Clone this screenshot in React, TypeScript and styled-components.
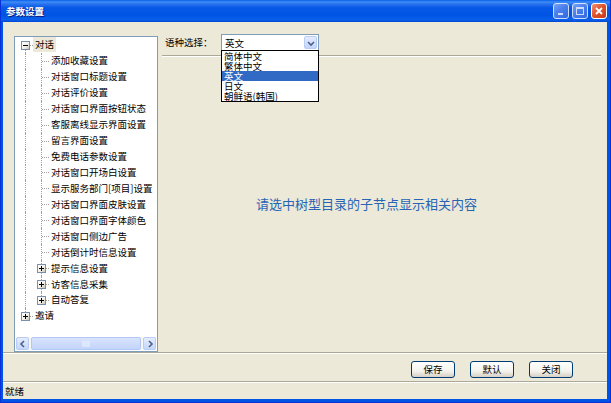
import React from "react";
import styled, { createGlobalStyle } from "styled-components";

const FONT = `"Noto Sans CJK SC", "Noto Sans", sans-serif`;

const GlobalStyle = createGlobalStyle`
  html, body { margin: 0; padding: 0; background: #fff; }
  body { font-family: ${FONT}; font-size: 9.5px; color: #000; }
  * { box-sizing: border-box; }
`;

const Window = styled.div`
  width: 611px;
  height: 403px;
  display: flex;
  flex-direction: column;
  background: #0054e3;
  border-left: 1px solid #0831d9;
  border-right: 1px solid #0831d9;
  border-bottom: 1px solid #0831d9;
`;

const TitleBar = styled.div`
  height: 22px;
  flex: none;
  display: flex;
  align-items: center;
  padding: 0 2px 0 5px;
  background: linear-gradient(180deg, #0a5fe8 0%, #3d8df5 9%, #2a73ef 18%, #0758e6 35%, #0054e3 70%, #0a60ec 90%, #0046d0 100%);
`;

const Title = styled.div`
  flex: 1;
  color: #fff;
  font-weight: bold;
  font-size: 9.5px;
  text-shadow: 1px 1px 0 #0a1a7a;
`;

const CaptionButtons = styled.div`
  display: flex;
  gap: 3px;
  margin-right: 1px;
`;

const CaptionButton = styled.div<{ $close?: boolean }>`
  width: 16px;
  height: 16px;
  border: 1px solid #fff;
  border-radius: 3px;
  display: flex;
  align-items: center;
  justify-content: center;
  background: ${(p) =>
    p.$close
      ? "linear-gradient(135deg, #f19275 0%, #e0552c 45%, #c7391a 100%)"
      : "linear-gradient(135deg, #8fb1f7 0%, #5b88ee 45%, #3f6fe3 100%)"};
  opacity: ${(p) => (p.$close ? 1 : 0.8)};
`;

const Client = styled.div`
  flex: 1;
  margin: 0 3px 3px 2px;
  background: #ece9d8;
  display: flex;
  flex-direction: column;
`;

const Main = styled.div`
  height: 330px;
  flex: none;
  display: flex;
  padding: 12px 6px 0 11px;
`;

const TreePanel = styled.div`
  margin-top: 2px;
  width: 144px;
  height: 316px;
  border: 1px solid #7f9db9;
  background: #fff;
  display: flex;
  flex-direction: column;
  padding: 1px;
`;

const TreeBody = styled.div`
  flex: 1;
  padding: 0 0 0 1px;
  margin-top: -1px;
  overflow: hidden;
`;

const Row = styled.div`
  height: 15.95px;
  display: flex;
  align-items: center;
  white-space: nowrap;
`;

const Cell = styled.div`
  position: relative;
  width: 16px;
  height: 16px;
  flex: none;
`;

const VLine = styled.div<{ $from: "top" | "mid"; $to: "mid" | "bottom" }>`
  position: absolute;
  left: 8px;
  top: ${(p) => (p.$from === "top" ? "0" : "8px")};
  bottom: ${(p) => (p.$to === "bottom" ? "0" : "8px")};
  border-left: 1px dotted #a0a0a0;
`;

const HLine = styled.div`
  position: absolute;
  left: 9px;
  right: 0;
  top: 8px;
  border-top: 1px dotted #a0a0a0;
`;

const Expander = styled.div`
  position: absolute;
  left: 4px;
  top: 4px;
  width: 9px;
  height: 9px;
  border: 1px solid #7a8fae;
  background: linear-gradient(135deg, #ffffff 0%, #f0eee6 60%, #c9c4b2 100%);
  display: flex;
  align-items: center;
  justify-content: center;
`;

const Label = styled.span<{ $selected?: boolean }>`
  padding: 0 2px;
  line-height: 15px;
  height: 15px;
  background: ${(p) => (p.$selected ? "#ece9d8" : "transparent")};
`;

const HScroll = styled.div`
  height: 13px;
  flex: none;
  display: flex;
  background: #f7f6f0;
`;

const ScrollBtn = styled.div`
  width: 13px;
  flex: none;
  border: 1px solid #b8ccf6;
  border-radius: 2px;
  background: linear-gradient(180deg, #e4ecfd 0%, #c6d7fb 100%);
  display: flex;
  align-items: center;
  justify-content: center;
`;

const ScrollThumb = styled.div`
  flex: 1;
  margin: 0 2px;
  border: 1px solid #b2c7f4;
  border-radius: 2px;
  background: linear-gradient(180deg, #d9e4fc 0%, #c3d4fa 100%);
  display: flex;
  align-items: center;
  justify-content: center;
`;

const RightPane = styled.div`
  flex: 1;
  display: flex;
  flex-direction: column;
  margin-left: 4px;
`;

const Header = styled.div`
  height: 21px;
  flex: none;
  display: flex;
  align-items: flex-start;
  position: relative;
  z-index: 2;
`;

const FieldLabel = styled.span`
  margin: 3px 0 0 3px;
  width: 56px;
  line-height: 10px;
`;

const Combo = styled.div`
  position: relative;
  width: 98px;
  height: 17px;
  border: 1px solid #7f9db9;
  background: #fff;
  display: flex;
  align-items: center;
  padding: 1px 1px 1px 3px;
`;

const ComboText = styled.span`
  flex: 1;
`;

const ComboArrow = styled.div`
  width: 13px;
  height: 13px;
  border: 1px solid #b8ccf6;
  border-radius: 2px;
  background: linear-gradient(180deg, #e4ecfd 0%, #c3d5fb 100%);
  display: flex;
  align-items: center;
  justify-content: center;
`;

const DropList = styled.div`
  position: absolute;
  left: -1px;
  top: 15px;
  width: 98px;
  border: 1px solid #000;
  background: #fff;
  padding: 0;
`;

const DropItem = styled.div<{ $selected?: boolean }>`
  height: 10px;
  line-height: 10px;
  padding-left: 2px;
  color: ${(p) => (p.$selected ? "#fff" : "#000")};
  background: ${(p) => (p.$selected ? "#316ac5" : "transparent")};
`;

const ContentPanel = styled.div`
  flex: 1;
  border-top: 1px solid #aca899;
  box-shadow: inset 0 1px 0 #fff;
  display: flex;
  align-items: center;
  justify-content: center;
  padding-right: 30px;
  padding-bottom: 1px;
`;

const Message = styled.div`
  color: #2864b4;
  font-size: 13px;
  line-height: 16px;
`;

const Etched = styled.div`
  height: 2px;
  flex: none;
  border-top: 1px solid #aca899;
  border-bottom: 1px solid #fff;
`;

const ButtonBar = styled.div`
  height: 27px;
  flex: none;
  display: flex;
  justify-content: flex-end;
  align-items: flex-start;
  gap: 15px;
  padding: 7px 34px 0 0;
`;

const DialogButton = styled.button`
  width: 44px;
  height: 17px;
  padding: 0;
  border: 1px solid #003c74;
  border-radius: 3px;
  background: linear-gradient(180deg, #ffffff 0%, #f4f3ee 60%, #d6d0c5 100%);
  font-family: ${FONT};
  font-size: 9.5px;
  line-height: 15px;
  color: #000;
`;

const StatusBar = styled.div`
  flex: 1;
  display: flex;
  align-items: center;
  padding-left: 2px;
  border-top: 1px solid #aca899;
  box-shadow: inset 0 1px 0 #fff;
`;

type Node = { label: string; level: number; kind: "leaf" | "plus" | "minus"; last?: boolean; selected?: boolean };

const nodes: Node[] = [
  { label: "对话", level: 0, kind: "minus", selected: true },
  { label: "添加收藏设置", level: 1, kind: "leaf" },
  { label: "对话窗口标题设置", level: 1, kind: "leaf" },
  { label: "对话评价设置", level: 1, kind: "leaf" },
  { label: "对话窗口界面按钮状态", level: 1, kind: "leaf" },
  { label: "客服离线显示界面设置", level: 1, kind: "leaf" },
  { label: "留言界面设置", level: 1, kind: "leaf" },
  { label: "免费电话参数设置", level: 1, kind: "leaf" },
  { label: "对话窗口开场白设置", level: 1, kind: "leaf" },
  { label: "显示服务部门[项目]设置", level: 1, kind: "leaf" },
  { label: "对话窗口界面皮肤设置", level: 1, kind: "leaf" },
  { label: "对话窗口界面字体颜色", level: 1, kind: "leaf" },
  { label: "对话窗口侧边广告", level: 1, kind: "leaf" },
  { label: "对话倒计时信息设置", level: 1, kind: "leaf" },
  { label: "提示信息设置", level: 1, kind: "plus" },
  { label: "访客信息采集", level: 1, kind: "plus" },
  { label: "自动答复", level: 1, kind: "plus", last: true },
  { label: "邀请", level: 0, kind: "plus", last: true },
];

const PlusMinus = ({ plus }: { plus: boolean }) => (
  <svg width="7" height="7" viewBox="0 0 7 7">
    <rect x="1" y="3" width="5" height="1" fill="#000" />
    {plus && <rect x="3" y="1" width="1" height="5" fill="#000" />}
  </svg>
);

const TreeRow = ({ n, first }: { n: Node; first: boolean }) => {
  const cells: React.ReactNode[] = [];
  if (n.level === 1) {
    cells.push(
      <Cell key="p">
        <VLine $from="top" $to="bottom" />
      </Cell>
    );
  }
  cells.push(
    <Cell key="c">
      <VLine $from={first ? "mid" : "top"} $to={n.last ? "mid" : "bottom"} />
      <HLine />
      {n.kind !== "leaf" && (
        <Expander>
          <PlusMinus plus={n.kind === "plus"} />
        </Expander>
      )}
    </Cell>
  );
  return (
    <Row>
      {cells}
      <Label $selected={n.selected}>{n.label}</Label>
    </Row>
  );
};

const Arrow = ({ dir }: { dir: "left" | "right" | "down" }) => {
  const d =
    dir === "left" ? "M5 1 L2 4 L5 7" : dir === "right" ? "M3 1 L6 4 L3 7" : "M1 3 L4 6 L7 3";
  return (
    <svg width="8" height="8" viewBox="0 0 8 8">
      <path d={d} fill="none" stroke="#4d6185" strokeWidth="1.6" />
    </svg>
  );
};

export default function App() {
  return (
    <>
      <GlobalStyle />
      <Window>
        <TitleBar>
          <Title>参数设置</Title>
          <CaptionButtons>
            <CaptionButton>
              <svg width="10" height="10" viewBox="0 0 10 10">
                <rect x="2" y="7" width="5" height="2" fill="#fff" />
              </svg>
            </CaptionButton>
            <CaptionButton>
              <svg width="10" height="10" viewBox="0 0 10 10">
                <rect x="1.5" y="1.5" width="7" height="7" fill="none" stroke="#fff" strokeWidth="1" />
                <rect x="1" y="1" width="8" height="2" fill="#fff" />
              </svg>
            </CaptionButton>
            <CaptionButton $close>
              <svg width="10" height="10" viewBox="0 0 10 10">
                <path d="M2 2 L8 8 M8 2 L2 8" stroke="#fff" strokeWidth="1.8" />
              </svg>
            </CaptionButton>
          </CaptionButtons>
        </TitleBar>
        <Client>
          <Main>
            <TreePanel>
              <TreeBody>
                {nodes.map((n, i) => (
                  <TreeRow key={i} n={n} first={i === 0} />
                ))}
              </TreeBody>
              <HScroll>
                <ScrollBtn>
                  <Arrow dir="left" />
                </ScrollBtn>
                <ScrollThumb>
                  <svg width="8" height="6" viewBox="0 0 8 6">
                    <path d="M1 0 V6 M3 0 V6 M5 0 V6 M7 0 V6" stroke="#eef3fe" strokeWidth="1" />
                  </svg>
                </ScrollThumb>
                <ScrollBtn>
                  <Arrow dir="right" />
                </ScrollBtn>
              </HScroll>
            </TreePanel>
            <RightPane>
              <Header>
                <FieldLabel>语种选择：</FieldLabel>
                <Combo>
                  <ComboText>英文</ComboText>
                  <ComboArrow>
                    <Arrow dir="down" />
                  </ComboArrow>
                  <DropList>
                    <DropItem>简体中文</DropItem>
                    <DropItem>繁体中文</DropItem>
                    <DropItem $selected>英文</DropItem>
                    <DropItem>日文</DropItem>
                    <DropItem>朝鲜语(韩国)</DropItem>
                  </DropList>
                </Combo>
              </Header>
              <ContentPanel>
                <Message>请选中树型目录的子节点显示相关内容</Message>
              </ContentPanel>
            </RightPane>
          </Main>
          <Etched />
          <ButtonBar>
            <DialogButton>保存</DialogButton>
            <DialogButton>默认</DialogButton>
            <DialogButton>关闭</DialogButton>
          </ButtonBar>
          <StatusBar>就绪</StatusBar>
        </Client>
      </Window>
    </>
  );
}
